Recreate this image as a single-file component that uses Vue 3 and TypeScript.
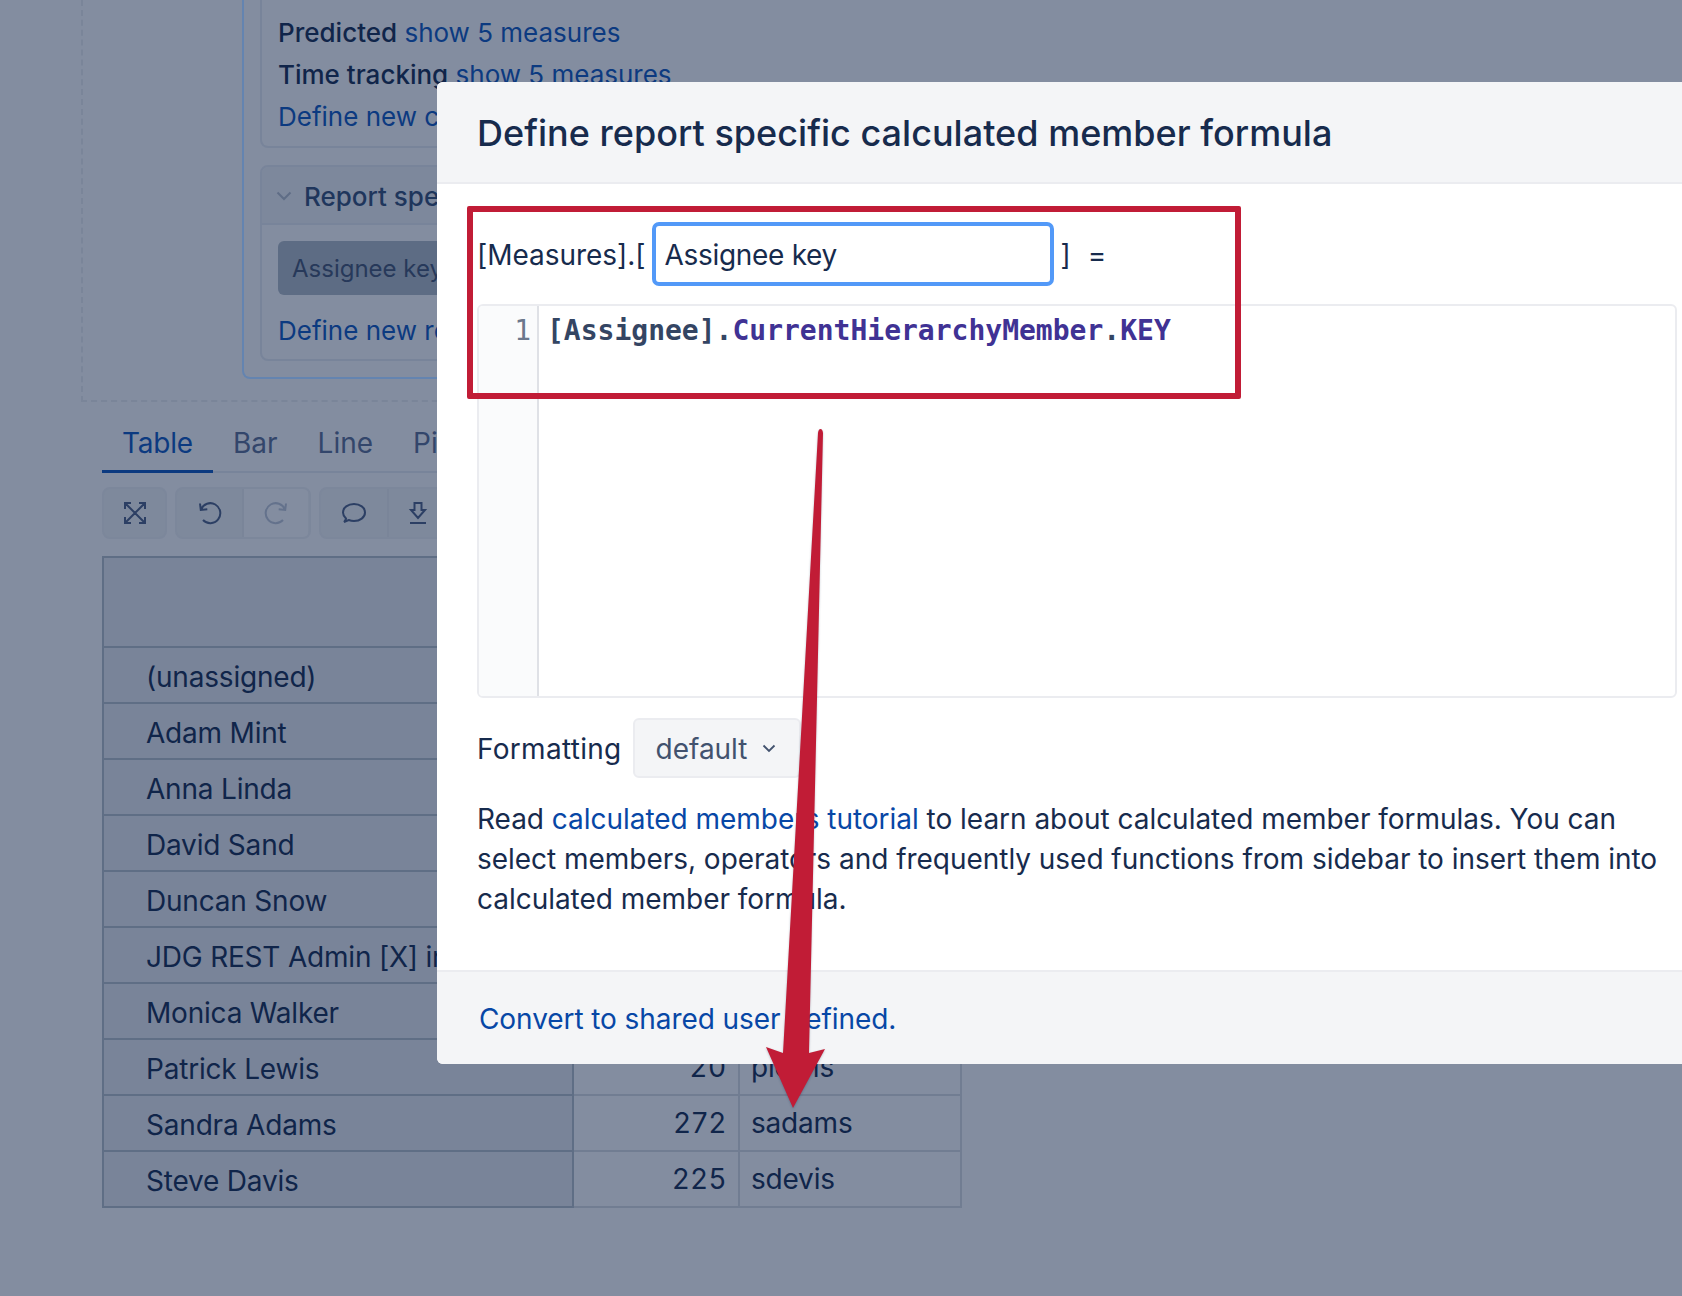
<script setup lang="ts">
interface Row { name: string; count: string; key: string }
const rows: Row[] = [
  { name: '(unassigned)', count: '', key: '' },
  { name: 'Adam Mint', count: '', key: '' },
  { name: 'Anna Linda', count: '', key: '' },
  { name: 'David Sand', count: '', key: '' },
  { name: 'Duncan Snow', count: '', key: '' },
  { name: 'JDG REST Admin [X] inactive', count: '', key: '' },
  { name: 'Monica Walker', count: '', key: '' },
  { name: 'Patrick Lewis', count: '20', key: 'plewis' },
  { name: 'Sandra Adams', count: '272', key: 'sadams' },
  { name: 'Steve Davis', count: '225', key: 'sdevis' },
]
const tabs: string[] = ['Table', 'Bar', 'Line', 'Pie']
</script>

<template>
  <div class="page">
    <section class="builder">
      <div class="bluebox">
        <div class="panel first">
          <p class="line"><b>Predicted</b> <a>show 5 measures</a></p>
          <p class="line"><b>Time tracking</b> <a>show 5 measures</a></p>
          <p class="line"><a>Define new calculated member</a></p>
        </div>
        <div class="panel second">
          <div class="panel-head">
            <svg class="chev" width="16" height="10" viewBox="0 0 16 10"><path d="M1.500 1.500 8 8l6.500-6.500" /></svg>
            <span>Report specific</span>
          </div>
          <div class="panel-body">
            <div class="chip">Assignee key</div>
            <p class="line define"><a>Define new report specific</a></p>
          </div>
        </div>
      </div>
    </section>

    <nav class="tabs">
      <span v-for="(t, i) in tabs" :key="t" class="tab" :class="{ active: i === 0 }">{{ t }}</span>
    </nav>

    <div class="toolbar">
      <div class="group one">
        <button class="tool">
          <svg width="24" height="24" viewBox="0 0 24 24"><path d="M2 8V2h6M22 8V2h-6M2 16v6h6M22 16v6h-6M2.500 2.500l19 19M21.500 2.500l-19 19" /></svg>
        </button>
      </div>
      <div class="group two">
        <button class="tool">
          <svg width="24" height="24" viewBox="0 0 24 24"><path d="M2 2.500 2.800 9l6.500-.8M3 8.500A10 10 0 1 1 5 19" /></svg>
        </button>
        <button class="tool off">
          <svg width="24" height="24" viewBox="0 0 24 24"><path d="M22 2.500 21.200 9l-6.500-.8M21 8.500A10 10 0 1 0 19 19" /></svg>
        </button>
      </div>
      <div class="group three">
        <button class="tool">
          <svg width="26" height="24" viewBox="0 0 26 24"><path d="M5 17.500C3 15.700 2 13.600 2 11.500 2 6.500 7 3 13 3s11 3.500 11 8.500-5 8.500-11 8.500c-2 0-3.800-.4-5.300-1L3 21c1.200-1 1.800-2.200 2-3.500Z" /></svg>
        </button>
        <button class="tool narrow">
          <svg width="20" height="24" viewBox="0 0 20 24"><path d="M6.500 2h7v7H17l-7 8-7-8h3.500ZM2 22h16" /></svg>
        </button>
      </div>
    </div>

    <table class="report">
      <colgroup>
        <col class="c1" /><col class="c2" /><col class="c3" />
      </colgroup>
      <thead>
        <tr><th class="name"></th><th></th><th></th></tr>
      </thead>
      <tbody>
        <tr v-for="r in rows" :key="r.name">
          <th class="name">{{ r.name }}</th>
          <td class="num">{{ r.count }}</td>
          <td class="key">{{ r.key }}</td>
        </tr>
      </tbody>
    </table>

    <div class="modal">
      <header class="m-head">
        <h2>Define report specific calculated member formula</h2>
      </header>
      <div class="m-body">
        <div class="name-row">
          <span>[Measures].[</span>
          <input class="name-input" value="Assignee key" />
          <span class="close-br">]</span>
          <span class="eq">=</span>
        </div>
        <div class="editor">
          <div class="gutter">1</div>
          <div class="code"><span class="dim">[Assignee].</span><span class="fn">CurrentHierarchyMember</span><span class="dim">.</span><span class="fn">KEY</span></div>
        </div>
        <div class="format-row">
          <span class="format-label">Formatting</span>
          <div class="select">
            <span>default</span>
            <svg width="14" height="9" viewBox="0 0 14 9"><path d="M1.500 1.500 7 7l5.500-5.500" /></svg>
          </div>
        </div>
        <p class="help">Read <a>calculated members tutorial</a> to learn about calculated member formulas. You can select members, operators and frequently used functions from sidebar to insert them into calculated member formula.</p>
      </div>
      <footer class="m-foot"><a>Convert to shared user defined.</a></footer>
    </div>

    <div class="callout"></div>
    <svg class="arrow" width="1682" height="1296" viewBox="0 0 1682 1296">
      <path d="M818 433q.5-4 2.500-4t2.500 4L809 1053l16-4-32 59-27-61 17 6Z" />
    </svg>
  </div>
</template>

<style>
html, body { margin: 0; background: #838da0; }
</style>

<style scoped>
.page {
  position: relative;
  width: 1682px;
  height: 1296px;
  overflow: hidden;
  background: #838da0;
  color: #10254a;
  font-family: Inter, "Liberation Sans", sans-serif;
  font-size: 28px;
  line-height: 40px;
}
a { color: #0c3a80; }
p { margin: 0; }

.builder {
  box-sizing: border-box;
  width: 1700px;
  height: 402px;
  margin-left: 81px;
  padding-left: 159px;
  border-left: 2px dashed #7a8599;
  border-bottom: 2px dashed #7a8599;
  font-size: 26px;
}
.bluebox {
  box-sizing: border-box;
  width: 1500px;
  height: 379px;
  padding: 0 16px;
  border: 2px solid #6484b0;
  border-top: 0;
  border-radius: 0 0 8px 8px;
}
.panel {
  border: 2px solid #78849a;
  border-radius: 8px;
  white-space: nowrap;
}
.first {
  box-sizing: border-box;
  height: 148px;
  padding: 12px 16px 0;
  border-top: 0;
  border-radius: 0 0 8px 8px;
}
.first .line { height: 42px; line-height: 42px; }
.first b { font-weight: 500; }
.second {
  box-sizing: border-box;
  height: 196px;
  margin-top: 17px;
}
.panel-head {
  box-sizing: border-box;
  display: flex;
  align-items: center;
  gap: 12px;
  height: 58px;
  padding: 4px 0 0 14px;
  background: #7d889c;
  border-bottom: 2px solid #78849a;
  border-radius: 6px 6px 0 0;
  color: #1f365c;
  font-weight: 500;
}
.chev { margin-top: -2px; }
.chev path { fill: none; stroke: #5f6d86; stroke-width: 2; }
.panel-body { padding: 16px 16px 0; }
.chip {
  box-sizing: border-box;
  height: 54px;
  padding: 0 14px;
  background: #5d6c84;
  border-radius: 6px;
  color: #27395a;
  font-size: 24px;
  line-height: 56px;
}
.define { margin-top: 16px; }

.tabs {
  box-sizing: border-box;
  display: flex;
  width: 1000px;
  height: 58px;
  margin: 13px 0 0 102px;
  border-bottom: 2px solid #78849a;
}
.tab {
  box-sizing: border-box;
  height: 58px;
  padding: 8px 20px 0;
  color: #33466b;
}
.tab.active {
  padding-left: 20px;
  padding-right: 20px;
  border-bottom: 3px solid #0c3a80;
  color: #0c3a80;
  letter-spacing: -0.2px;
}

.toolbar {
  display: flex;
  gap: 8px;
  height: 52px;
  margin: 14px 0 0 102px;
}
.group {
  display: flex;
  border: 2px solid #7c879b;
  border-radius: 8px;
  background: #7e899c;
  overflow: hidden;
  box-sizing: border-box;
}
.one { width: 65px; }
.two { width: 136px; }
.three { width: 300px; }
.tool {
  flex: 0 0 auto;
  display: flex;
  align-items: center;
  justify-content: center;
  width: 66px;
  padding: 0;
  border: 0;
  background: transparent;
}
.one .tool { width: 61px; }
.two .tool { width: 66px; }
.two .tool:first-child { width: 65px; }
.two .tool + .tool { background: #838da0; border-left: 2px solid #7a8599; }
.three .tool + .tool { border-left: 2px solid #7a8599; }
.three .tool.narrow { width: 60px; }
.tool svg path { fill: none; stroke: #2c3f64; stroke-width: 2; }
.tool.off svg path { stroke: #64728c; }

.report {
  margin: 17px 0 0 102px;
  border-collapse: collapse;
  table-layout: fixed;
  width: 858px;
  border: 2px solid #5f6e85;
}
.c1 { width: 470px; }
.c2 { width: 166px; }
.c3 { width: 222px; }
.report tr { height: 56px; }
.report thead tr { height: 90px; }
.report th, .report td {
  padding: 0;
  border: 2px solid #717d92;
  font-weight: 400;
  white-space: nowrap;
  letter-spacing: -0.2px;
}
.report .name {
  box-sizing: border-box;
  padding: 4px 0 0 42px;
  background: #798499;
  border: 2px solid #5f6e85;
  text-align: left;
  overflow: hidden;
}
.report .num { padding-right: 11px; text-align: right; letter-spacing: 1.2px; }
.report .key { padding-left: 11px; }

.modal {
  position: absolute;
  left: 437px;
  top: 82px;
  display: flex;
  flex-direction: column;
  width: 1280px;
  height: 982px;
  background: #fff;
  border-radius: 6px;
  color: #172b4d;
  letter-spacing: -0.03px;
}
.m-head {
  box-sizing: border-box;
  display: flex;
  align-items: center;
  height: 102px;
  padding: 2px 0 0 40px;
  background: #f4f5f7;
  border-bottom: 2px solid #ebecf0;
  border-radius: 6px 6px 0 0;
}
h2 {
  margin: 0;
  font-size: 36px;
  font-weight: 500;
  line-height: 48px;
  letter-spacing: 0.02px;
}
.m-body {
  flex: 1;
  padding: 38px 40px 0;
}
.name-row {
  display: flex;
  align-items: center;
  height: 64px;
}
.name-row span { padding-top: 2px; }
.name-input {
  box-sizing: border-box;
  width: 402px;
  height: 64px;
  margin-left: 7px;
  padding: 2px 8px 0;
  border: 4px solid #5299f8;
  border-radius: 7px;
  outline: 0;
  color: #172b4d;
  font: inherit;
  letter-spacing: -0.3px;
}
.close-br { margin-left: 6px; }
.eq { margin-left: 17px; }
.editor {
  box-sizing: border-box;
  display: flex;
  width: 1200px;
  height: 394px;
  margin-top: 18px;
  border: 2px solid #ebecf0;
  border-radius: 6px;
  font-family: "DejaVu Sans Mono", monospace;
  letter-spacing: 0;
}
.gutter {
  box-sizing: border-box;
  width: 60px;
  padding: 5px 6px 0 0;
  background: #fafbfc;
  border-right: 2px solid #dfe1e6;
  border-radius: 4px 0 0 4px;
  color: #6b778c;
  font-size: 28px;
  font-weight: 400;
  text-align: right;
}
.code {
  padding: 5px 0 0 8px;
  font-weight: 700;
  white-space: pre;
}
.dim { color: #344563; }
.fn { color: #403294; }
.format-row {
  display: flex;
  align-items: center;
  gap: 11px;
  margin-top: 20px;
}
.format-row span { padding-top: 2px; }
.format-label { letter-spacing: 0.3px; }
.select {
  box-sizing: border-box;
  display: flex;
  align-items: center;
  gap: 15px;
  width: 168px;
  height: 60px;
  padding-left: 21px;
  background: #f4f5f7;
  border: 2px solid #ebecf0;
  border-radius: 6px;
  color: #42526e;
}
.select path { fill: none; stroke: #42526e; stroke-width: 1.800; }
.help { margin-top: 21px; }
.help a { color: #0747a6; }
.m-foot {
  box-sizing: border-box;
  height: 94px;
  padding: 27px 0 0 42px;
  background: #f4f5f7;
  border-top: 2px solid #ebecf0;
  border-radius: 0 0 6px 6px;
}
.m-foot a { color: #0747a6; letter-spacing: -0.08px; }

.callout {
  position: absolute;
  left: 467px;
  top: 206px;
  box-sizing: border-box;
  width: 774px;
  height: 193px;
  border: 6px solid #c11c36;
  border-radius: 2px;
}
.arrow {
  position: absolute;
  left: 0;
  top: 0;
  pointer-events: none;
  filter: drop-shadow(0 1px 1px rgba(9, 30, 66, 0.25));
}
.arrow path { fill: #c11c36; }
</style>
